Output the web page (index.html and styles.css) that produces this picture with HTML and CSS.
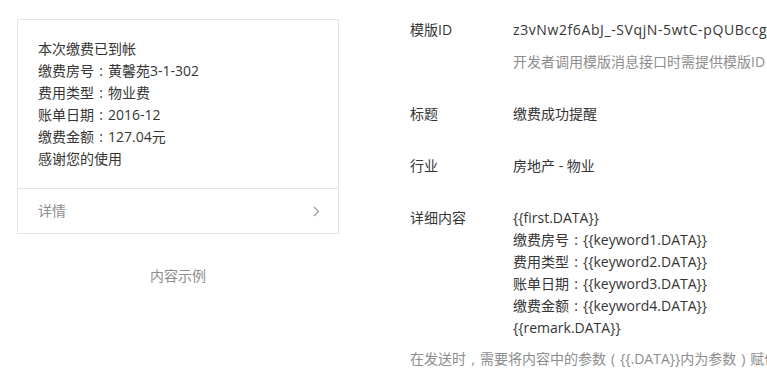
FILE: index.html
```html
<!DOCTYPE html>
<html lang="zh-CN">
<head>
<meta charset="utf-8">
<link rel="stylesheet" href="styles.css">
</head>
<body>
<div class="page">
  <div class="preview">
    <div class="card">
      <div class="card-body">
        <p>本次缴费已到帐</p>
        <p>缴费房号<span class="p">:</span>黄馨苑3-1-302</p>
        <p>费用类型<span class="p">:</span>物业费</p>
        <p>账单日期<span class="p">:</span>2016-12</p>
        <p>缴费金额<span class="p">:</span>127.04元</p>
        <p>感谢您的使用</p>
      </div>
      <div class="card-foot">
        <span>详情</span>
        <svg class="chev" width="7" height="11" viewBox="0 0 7 11"><path d="M1 1 L5.5 5.5 L1 10" fill="none" stroke="#9a9a9a" stroke-width="1.2"/></svg>
      </div>
    </div>
    <div class="caption">内容示例</div>
  </div>
  <div class="info">
    <div class="row">
      <div class="label">模版ID</div>
      <div class="value">
        <div class="tid">z3vNw2f6AbJ_-SVqjN-5wtC-pQUBccg</div>
        <div class="hint">开发者调用模版消息接口时需提供模版ID</div>
      </div>
    </div>
    <div class="row">
      <div class="label">标题</div>
      <div class="value">缴费成功提醒</div>
    </div>
    <div class="row">
      <div class="label">行业</div>
      <div class="value">房地产 - 物业</div>
    </div>
    <div class="row">
      <div class="label">详细内容</div>
      <div class="value">
        <div>{{first.DATA}}</div>
        <div>缴费房号<span class="p">:</span>{{keyword1.DATA}}</div>
        <div>费用类型<span class="p">:</span>{{keyword2.DATA}}</div>
        <div>账单日期<span class="p">:</span>{{keyword3.DATA}}</div>
        <div>缴费金额<span class="p">:</span>{{keyword4.DATA}}</div>
        <div>{{remark.DATA}}</div>
      </div>
    </div>
    <div class="note">在发送时<span class="p">,</span>需要将内容中的参数<span class="p">(</span>{{.DATA}}内为参数<span class="p">)</span>赋值替换为需要的信息</div>
  </div>
</div>
</body>
</html>
```

FILE: styles.css
```css
html, body {
  margin: 0;
  padding: 0;
  background: #fff;
  overflow: hidden;
}
body {
  font-family: "Open Sans", "Noto Sans CJK SC", sans-serif;
  font-size: 14px;
  line-height: 22px;
  color: #353535;
}
.p {
  display: inline-block;
  width: 14px;
  text-align: center;
}
.page {
  display: flex;
  padding: 19px 0 0 17px;
  white-space: nowrap;
}
.preview {
  width: 322px;
  flex: none;
}
.card {
  border: 1px solid #e4e4e4;
}
.card-body {
  padding: 18px 20px 18px 20px;
}
.card-body p {
  margin: 0;
}
.card-foot {
  border-top: 1px solid #e4e4e4;
  height: 44px;
  padding: 0 18px 0 20px;
  display: flex;
  align-items: center;
  justify-content: space-between;
  color: #8d8d8d;
}
.caption {
  text-align: center;
  color: #8d8d8d;
  margin-top: 31px;
}
.info {
  margin-left: 71px;
  flex: 1;
  min-width: 0;
}
.row {
  display: flex;
  margin-bottom: 30px;
}
.row:nth-child(4) {
  margin-bottom: 9px;
}
.label {
  width: 103px;
  flex: none;
}
.tid {
  letter-spacing: 0.6px;
}
.hint {
  color: #8d8d8d;
  margin-top: 10px;
}
.note {
  color: #8d8d8d;
}
```
